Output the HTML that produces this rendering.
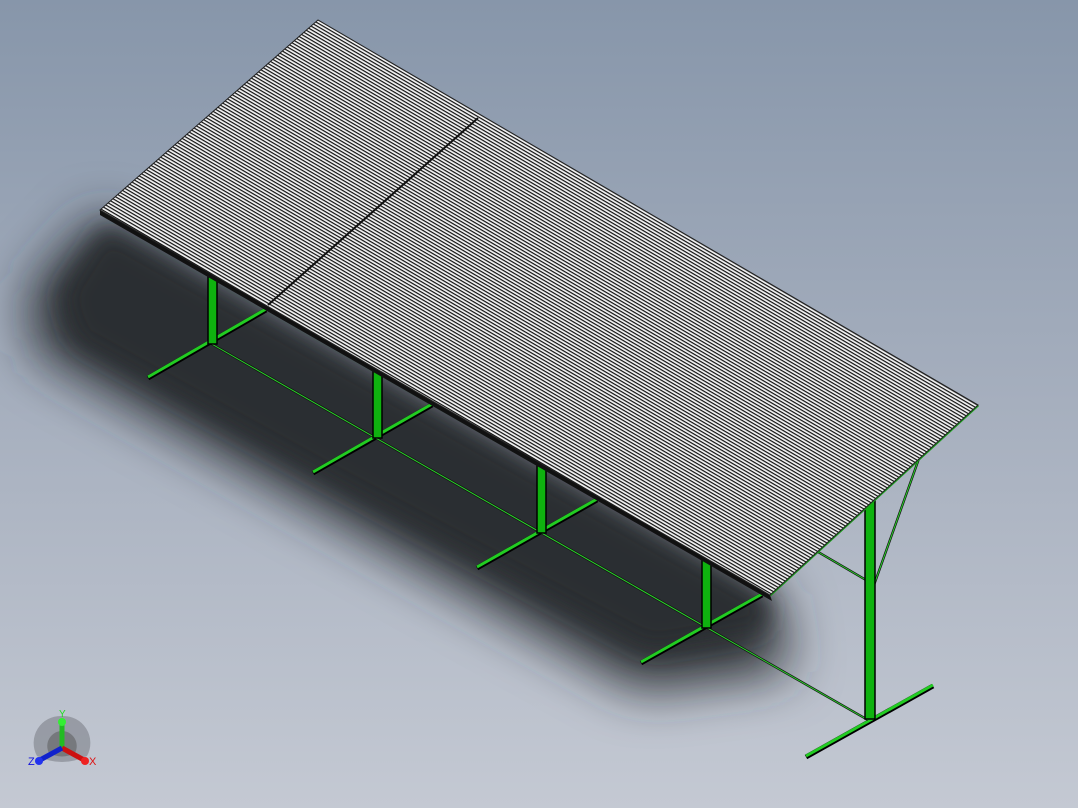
<!DOCTYPE html>
<html><head><style>
html,body{margin:0;padding:0;width:1078px;height:808px;overflow:hidden}
</style></head><body>
<svg width="1078" height="808" viewBox="0 0 1078 808" xmlns="http://www.w3.org/2000/svg">
<defs>
<linearGradient id="bg" x1="0" y1="0" x2="0" y2="1">
<stop offset="0" stop-color="#8796aa"/>
<stop offset="0.5" stop-color="#a6afbe"/>
<stop offset="1" stop-color="#c4c9d3"/>
</linearGradient>
<filter id="blur" x="-20%" y="-20%" width="140%" height="140%"><feGaussianBlur stdDeviation="26"/></filter>
<filter id="blur2" x="-20%" y="-20%" width="140%" height="140%"><feGaussianBlur stdDeviation="12"/></filter>
<pattern id="stripes" width="3" height="3" patternUnits="userSpaceOnUse" patternTransform="rotate(30.3)">
<rect width="3" height="3" fill="#f2f2f2"/>
<rect y="0" width="3" height="1.2" fill="#111"/>
</pattern>
</defs>
<rect width="1078" height="808" fill="url(#bg)"/>
<!-- shadow -->
<polygon points="100,215 30,290 35,350 300,500 640,690 790,670 775,595" fill="#2a2d32" filter="url(#blur)"/>
<polygon points="105,225 60,295 75,340 320,475 650,650 765,630 770,600" fill="#2b2e33" filter="url(#blur2)"/>
<!-- feet & beams -->
<g stroke="#000" stroke-width="5" stroke-linecap="butt">
<line x1="148" y1="378" x2="266" y2="310"/>
<line x1="313" y1="473" x2="432" y2="405"/>
<line x1="477" y1="568" x2="597" y2="500"/>
<line x1="641" y1="663" x2="762" y2="595"/>
<line x1="806" y1="757" x2="933" y2="686"/>
</g>
<g stroke="#22cc22" stroke-width="3">
<line x1="148" y1="377" x2="266" y2="309"/>
<line x1="313" y1="472" x2="432" y2="404"/>
<line x1="477" y1="567" x2="597" y2="499"/>
<line x1="641" y1="662" x2="762" y2="594"/>
<line x1="806" y1="756" x2="933" y2="685"/>
</g>
<g stroke="#111" stroke-width="2.4"><line x1="210" y1="343" x2="868" y2="720"/>
<line x1="922" y1="450" x2="874" y2="585"/><line x1="813" y1="549" x2="866" y2="580"/></g>
<g stroke="#2ad42a" stroke-width="1"><line x1="210" y1="343" x2="868" y2="720"/>
<line x1="922" y1="450" x2="874" y2="585"/><line x1="813" y1="549" x2="866" y2="580"/></g>
<!-- posts -->
<g fill="#0fb20f" stroke="#000" stroke-width="1.5">
<rect x="208" y="272" width="9" height="72"/>
<rect x="373" y="368" width="9" height="70"/>
<rect x="537" y="462" width="9" height="71"/>
<rect x="702" y="557" width="9" height="71"/>
<rect x="865" y="497" width="10" height="222"/>
</g>
<!-- roof edge thickness -->
<polygon points="100,210 770,595 772,601 100,215" fill="#111"/>
<line x1="770" y1="595" x2="978" y2="405" stroke="#1a9a1a" stroke-width="3"/>
<!-- roof -->
<polygon points="318,20 100,210 770,595 978,405" fill="url(#stripes)" stroke="#222" stroke-width="1"/>
<line x1="478" y1="118" x2="268" y2="305" stroke="#111" stroke-width="2"/>
<!-- triad -->
<g transform="translate(62,748)">
<path d="M-25,8 A27,27 0 0 1 0,-32 A27,27 0 0 1 25,8 Q0,20 -25,8Z" fill="#7d8088" opacity="0.6"/>
<path d="M-13,5 A15,15 0 0 1 0,-17 A15,15 0 0 1 13,5 Q0,12 -13,5Z" fill="#555" opacity="0.5"/>
<line x1="0" y1="0" x2="0" y2="-24" stroke="#22bb22" stroke-width="5"/>
<circle cx="0" cy="-26" r="4" fill="#33ee33"/>
<line x1="0" y1="0" x2="22" y2="12" stroke="#cc1111" stroke-width="5"/>
<circle cx="23" cy="13" r="4" fill="#ee2222"/>
<line x1="0" y1="0" x2="-22" y2="12" stroke="#1122cc" stroke-width="5"/>
<circle cx="-23" cy="13" r="4" fill="#2233ee"/>
<text x="-3" y="-31" font-family="Liberation Sans, sans-serif" font-size="10" fill="#22dd22">Y</text>
<text x="27" y="17" font-family="Liberation Sans, sans-serif" font-size="11" fill="#dd1111">X</text>
<text x="-34" y="17" font-family="Liberation Sans, sans-serif" font-size="11" fill="#1111dd">Z</text>
</g>
</svg>
</body></html>
